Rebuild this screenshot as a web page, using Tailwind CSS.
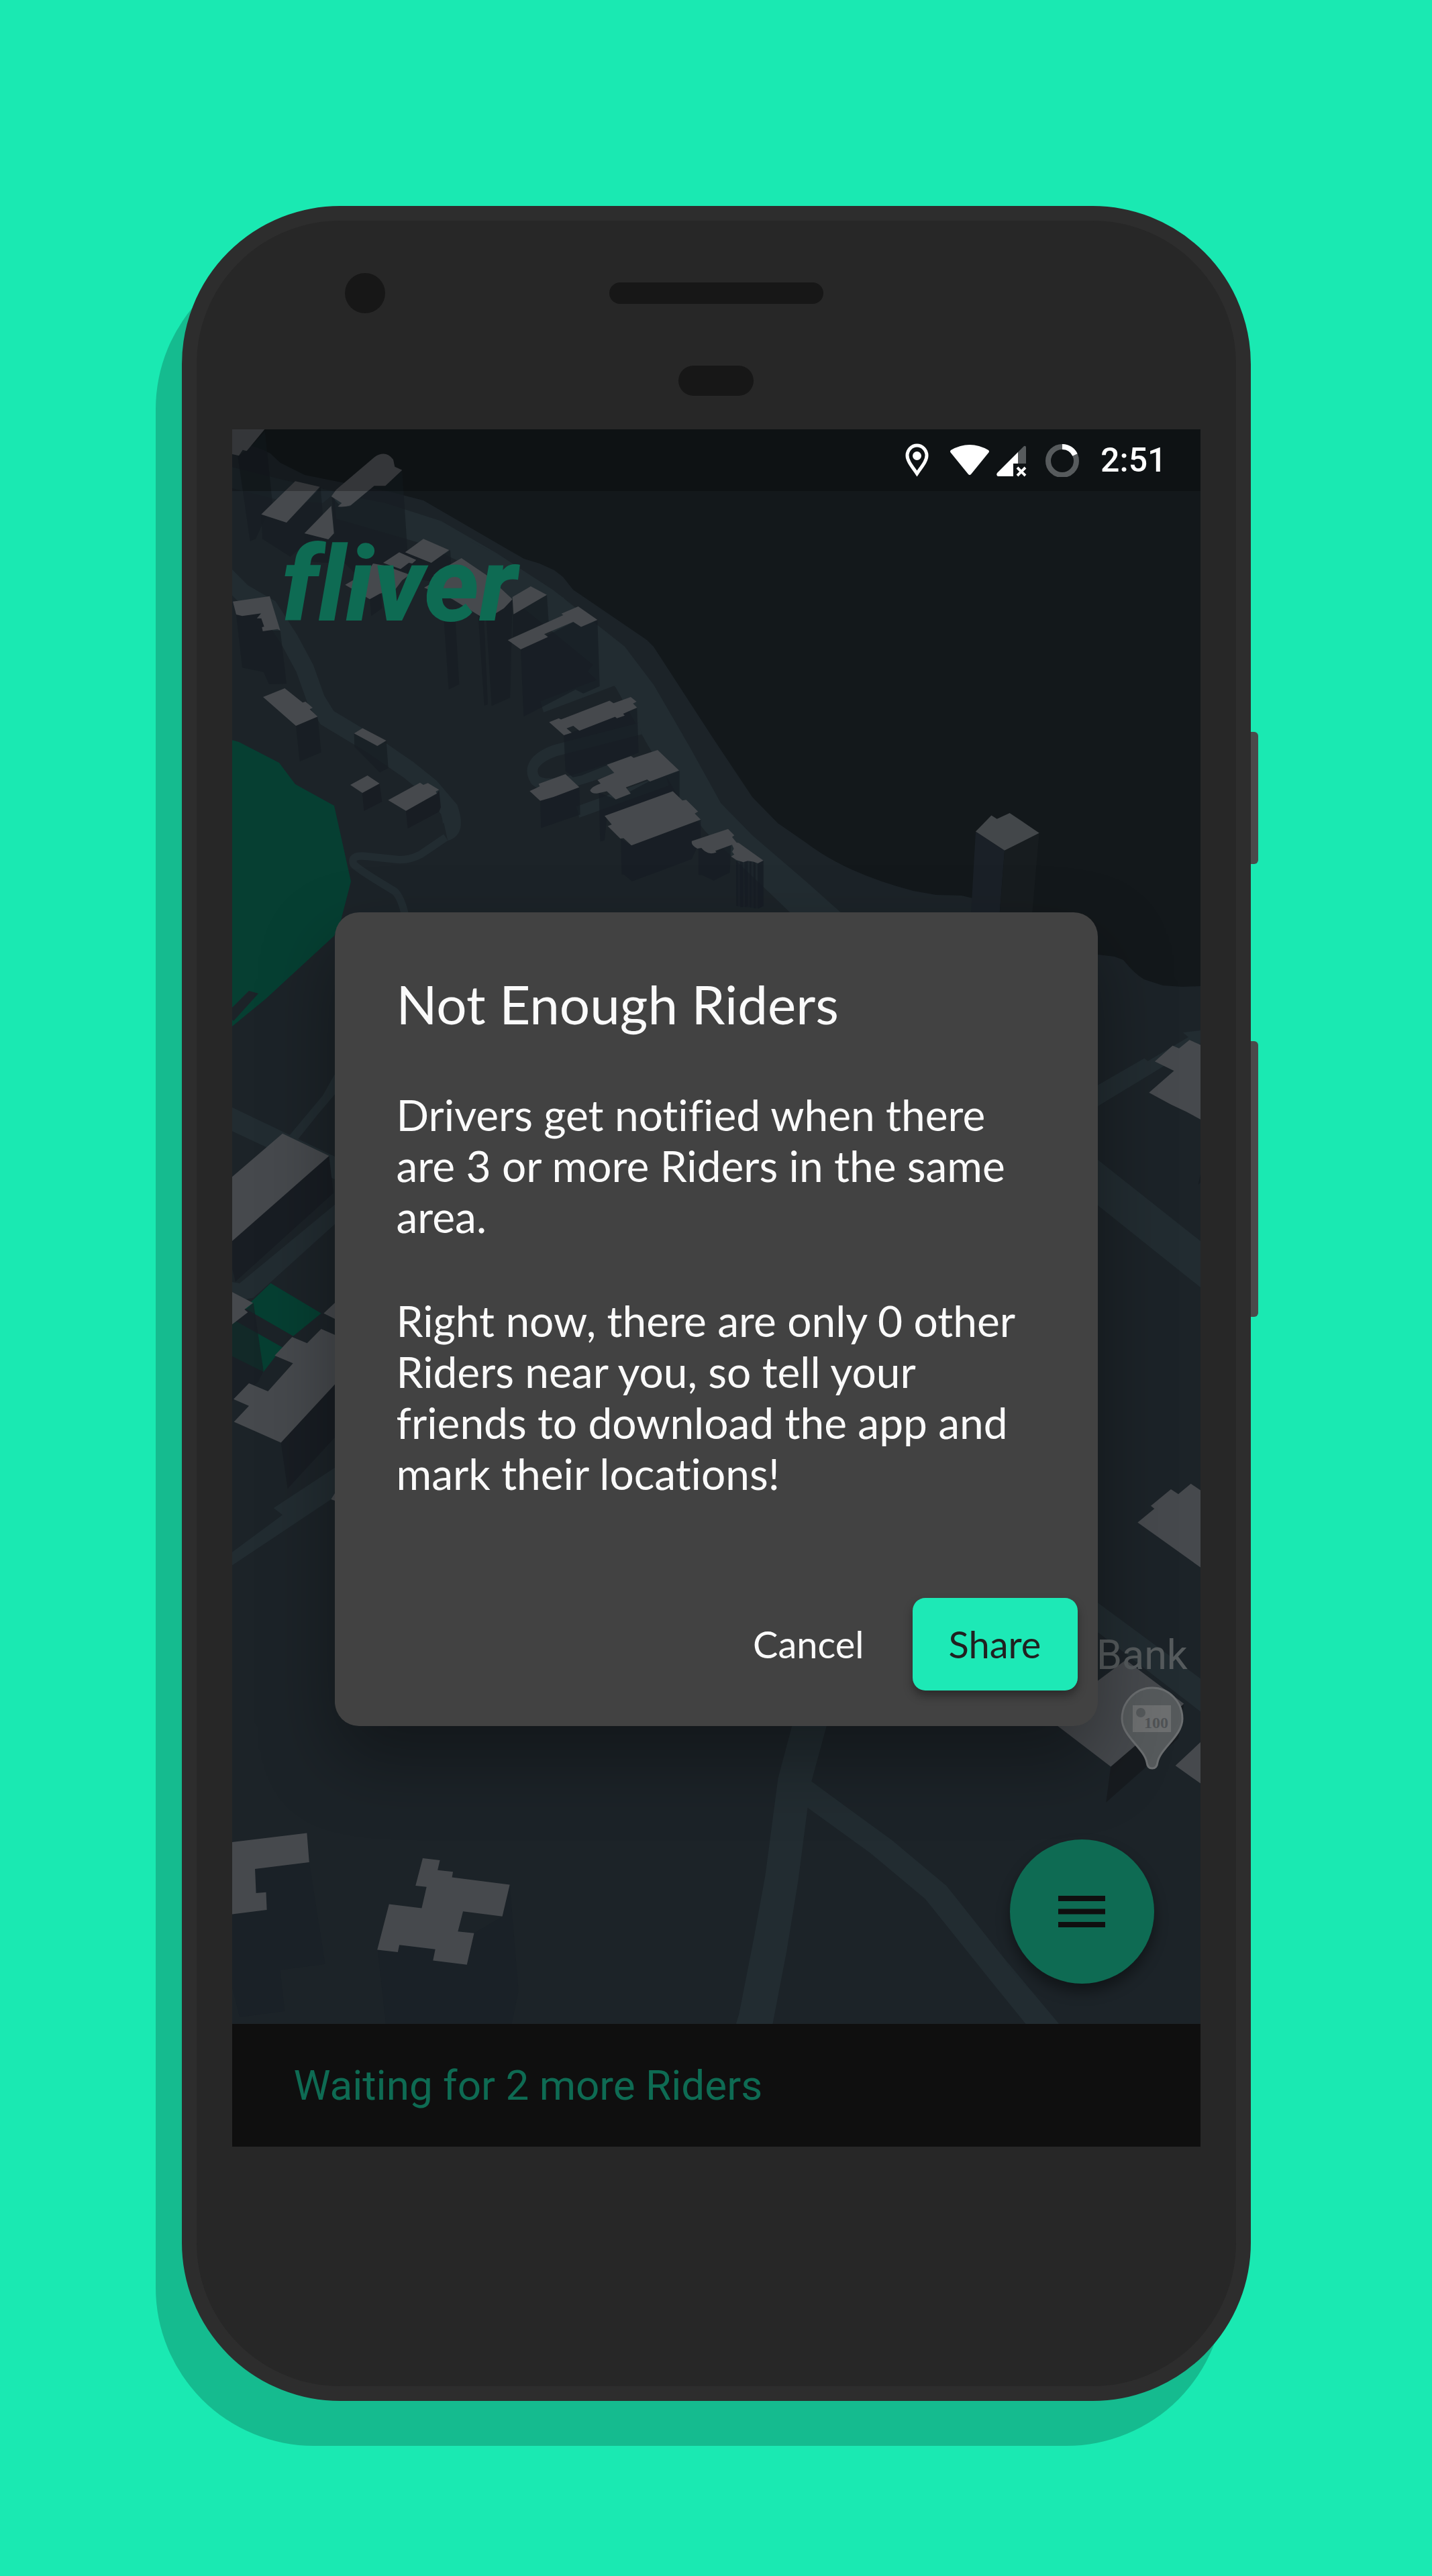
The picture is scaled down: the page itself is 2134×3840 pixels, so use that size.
<!DOCTYPE html>
<html lang="en">
<head>
<meta charset="utf-8">
<meta name="viewport" content="width=device-width, initial-scale=1">
<title>Fliver</title>
<script src="https://cdn.jsdelivr.net/npm/@tailwindcss/browser@4"></script>
</head>
<body class="min-h-screen bg-[#1ae9b2] px-8 pt-[307px] pb-[261px] font-['Lato',sans-serif]">
<div class="relative mx-auto w-full max-w-[1593px] rounded-[236px] border-[22px] border-[#2d2d2d] bg-[#272727] px-[53px] pb-[357px] shadow-[-39px_67px_0_0_#15bb8f]">
  <!-- Side buttons -->
  <div class="absolute top-[762px] -right-[33px] h-[197px] w-[11px] rounded-r-[6px] bg-[#4a4a4a]"></div>
  <div class="absolute top-[1223px] -right-[33px] h-[411px] w-[11px] rounded-r-[6px] bg-[#4a4a4a]"></div>

  <!-- Camera, speaker, sensor -->
  <div class="flex flex-col items-center pt-[78px] pb-[50px]">
    <div class="grid w-full grid-cols-[1fr_auto_1fr] items-center">
      <div class="ml-[168px] h-[60px] w-[60px] rounded-full bg-[#171717]"></div>
      <div class="h-8 w-[319px] rounded-full bg-[#171717]"></div>
    </div>
    <div class="mt-[78px] h-[45px] w-28 rounded-full bg-[#171717]"></div>
  </div>

  <!-- Screen -->
  <div class="relative flex flex-col overflow-hidden">
    <main class="relative flex min-h-[2377px] flex-col">
      <svg class="absolute inset-0 h-full w-full" viewBox="345 640 1443 2377" preserveAspectRatio="xMidYMid slice" aria-hidden="true">
        <rect x="345" y="640" width="1443" height="2377" fill="#1c2328"/>
        <!-- water -->
        <path fill="#13181b" d="M345 640V655L390 670 402 676 417 690 453 708 513 720 580 733 630 746 780 833 803 840 825 850 838 860 853 879 963 954 973 964 1062 1101 1120 1188 1158 1227 1200 1256Q1260 1302 1360 1328L1394 1334 1432 1335 1453 1340 1491 1359 1560 1410 1635 1423 1660 1426 1673 1431Q1690 1452 1704 1460L1732 1469 1761 1471 1788 1470V640Z"/>
        <!-- roads, north -->
        <g transform="translate(340 640) scale(.3333)" fill="#222c31">
          <path d="M0 165 240 225 480 280 420 330 240 320 0 260Z" fill="#1f282e"/>
          <path d="M470 285 700 330 950 410 1200 555 1500 755V900L1250 720 1050 600 860 510 480 400Z"/>
          <path d="M-20 650 60 730 180 800 270 940 340 1070 390 1210 440 1290 640 1410 800 1520 900 1600 985 1700Q1015 1790 970 1800" fill="none" stroke="#222c31" stroke-width="82"/>
          <path d="M970 1825 860 1900Q800 1932 740 1923L620 1910Q540 1900 558 1945Q580 1970 740 2065Q770 2090 790 2180" fill="none" stroke="#222c31" stroke-width="34"/>
        </g>
        <g transform="translate(700 780) scale(.3333 .3827)" fill="#222c31">
          <path d="M0 70 140 130 370 260 690 480 820 630 980 870 1120 1090 1260 1215 1500 1395 1700 1550H1470L1050 1200 940 1080 790 860 650 640 560 560 180 290 0 170Z"/>
          <path d="M760 800 380 885Q240 930 290 1000Q350 1050 640 950M320 715 610 620 540 560M480 1125 880 1000" fill="none" stroke="#222c31" stroke-width="46"/>
        </g>
        <!-- park -->
        <path fill="#063f32" d="M340 1102 355 1106 415 1137 439 1169 497 1201 522 1314 507 1372 497 1395 395 1489 345 1530Z"/>
        <path fill="#1c2328" d="M345 1502 370 1477 384 1481 347 1522 345 1520Z"/>

        <!-- buildings, north-west -->
        <g transform="translate(340 640) scale(.3333)">
          <g fill="#171d23" fill-opacity=".75">
            <path d="M40 120 80 95 162 10 195 330 120 490 95 500Z"/>
            <path d="M145 380 258 417 410 260 425 440 275 570 150 490Z"/>
            <path d="M340 465 445 492 470 465 490 600 340 590Z"/>
            <path d="M460 300 500 345 540 345 650 253 700 253 775 182 805 640 560 640 480 560Z"/>
            <path d="M790 550 905 597 990 540 1000 700 800 660Z"/>
            <path d="M630 755 680 725 685 800 637 835ZM960 830 1012 830 1030 1140 983 1163ZM1115 830 1140 825 1158 1230 1142 1235ZM1150 830 1268 760 1258 1200 1175 1237Z"/>
            <path d="M1270 825 1422 740 1430 860 1270 930Z"/>
            <path d="M33 828 140 825 165 900 230 900 258 1138 180 1140 155 1085 60 1066Z"/>
            <path d="M300 1325 397 1285 413 1445 317 1485ZM560 1360 665 1416 704 1393 713 1515 675 1535 562 1420Z"/>
          </g>
          <g fill="#46494d">
            <path d="M0 0H160L80 97 62 92 45 118 0 108Z"/>
            <path d="M297 232 407 257 258 417 145 380ZM458 342 470 465 445 492 338 465Z"/>
            <path d="M480 270 650 125Q700 90 735 135L742 167 775 182 700 253H650L545 340Q510 350 487 345L505 330 458 300Z"/>
            <path d="M870 490 985 540 905 597 788 550ZM762 550 838 584 820 600 805 597 768 625 690 597Z"/>
            <path d="M645 600 700 610 808 650 775 675 745 715 675 735 630 760 520 695 555 675 590 685Z"/>
            <path d="M1040 576 1152 652 1268 760 1230 800 1150 850 1115 830 1000 760 873 708 940 670 915 652 945 630Z"/>
            <path d="M1350 702 1422 740 1273 827 1268 750Z"/>
            <path d="M18 770 183 746 230 900 218 893 152 903 148 885 158 882 145 845H125L145 823 60 835 33 828Z"/>
            <path d="M250 1158 330 1222 343 1218 375 1245 362 1252 397 1285 300 1326 153 1197ZM598 1337 704 1392 664 1416 560 1360Z"/>
          </g>
        </g>
        <g transform="translate(340 1080) scale(.3333)">
          <path fill="#181d23" d="M597 306 674 264 685 345 604 386ZM792 386 930 310 940 295 948 370 940 390 800 465Z"/>
          <path fill="#46494d" d="M620 228 674 264 597 306 543 270ZM712 338 855 260 870 270 890 262 940 292 925 300 930 308 792 386Z"/>
        </g>
        <!-- buildings along the coast -->
        <g transform="translate(700 780) scale(.3333 .3827)">
          <g fill="#171d24" fill-opacity=".75">
            <path d="M225 490 460 385 495 404 568 378 578 635 505 663 470 648 238 753Z"/>
            <path d="M418 826 745 720 752 893 495 983 458 990 425 965Z"/>
            <path d="M312 1080 487 1028 491 1135 316 1187ZM575 1050 650 1075 800 1005 935 965V1080L610 1150 600 1235 580 1240Z"/>
            <path d="M673 1230 720 1255 1030 1155V1230L990 1308 723 1395 685 1368H676ZM1020 1265 1085 1285 1165 1250 1160 1360 1088 1392 1035 1370H1020Z"/>
            <path d="M1188 1315H1195V1490H1190ZM1205 1315H1219V1495H1207ZM1225 1315H1240V1490L1228 1496ZM1248 1315H1256V1495H1250ZM1265 1318H1275V1500H1267ZM1284 1324 1310 1314V1490L1286 1502Z"/>
            <path d="M1188 1315H1310V1490L1285 1500 1190 1490Z" fill-opacity=".35"/>
          </g>
          <g fill="#46494d">
            <path d="M167 455 415 358 407 352 482 324 568 376 495 404 460 384 330 432 347 443 225 491Z"/>
            <path d="M352 775 395 760 405 764 622 691 640 701 717 677 743 695 727 702 745 718 683 742 690 749 655 760 647 754 487 808 460 789 430 799 453 816 418 826Z"/>
            <path d="M610 941 718 907 730 914 837 883 933 963 803 1006 790 998 695 1029 717 1053 650 1076 610 1044 570 1052Q540 1055 535 1040 545 1025 582 1014L568 1000 643 972Z"/>
            <path d="M265 1043 310 1025 305 1015 425 977 487 1028 372 1066 312 1081Z"/>
            <path d="M600 1140 905 1044 948 1080 965 1077 1018 1123 1003 1131 1030 1154 720 1255 685 1227 670 1228 614 1180 632 1173Z"/>
            <path d="M990 1238 1152 1191 1180 1216 1170 1222 1190 1244 1200 1245 1310 1314 1285 1325 1265 1318 1240 1315 1220 1320 1190 1312 1165 1298 1180 1290 1170 1280 1178 1268 1170 1252 1095 1276 1100 1282Q1060 1295 1033 1265L1015 1267Q985 1255 990 1238Z"/>
          </g>
        </g>
        <!-- west edge -->
        <g transform="translate(340 1600) scale(.3333 .4847)">
          <path fill="#222c31" d="M0 100 480 258V328L0 173ZM480 -5V60L400 125 310 202 272 190 420 68ZM480 400V460L110 690 40 700 0 660V640L48 646ZM480 1210V1300L0 1520V1480L240 1358 200 1337Z"/>
          <path fill="#181d23" d="M0 520 448 255 468 368 30 640 0 560Z"/>
          <path fill="#46494d" d="M0 327 240 185 448 254 0 525Z"/>
          <path fill="#063f32" d="M187 645 413 738 288 808 70 722ZM0 750 240 843 155 918 0 865Z"/>
          <path fill="#181d23" fill-opacity=".65" d="M0 770 110 706 155 915 130 950 0 1015Z"/>
          <path fill="#181d23" d="M233 1136 480 950V1115L263 1277Z"/>
          <path fill="#46494d" d="M0 667 108 706 70 726 85 735 0 780ZM480 702V757L424 738ZM480 1285V1316L457 1310Z"/>
          <path fill="#46494d" d="M413 786 480 806V952L233 1136 23 1072 90 1023 21 1002 90 953 175 978 287 892 205 868 283 811 350 830Z"/>
        </g>
        <!-- east edge -->
        <g transform="translate(1360 1180) scale(.3444 .523)">
          <path fill="#1a2027" d="M270 114 395 168 374 345H250Z"/>
          <path fill="#171c1f" d="M395 168 545 118 515 345H374Z"/>
          <path fill="#43474a" d="M417 61 545 118 395 168 270 114 338 68 362 78Z"/>
          <path fill="#222c31" d="M790 840 1000 760 1015 768 1190 700 1167 687 1250 680V715L1040 800 790 900ZM790 1045 1250 1285V1417L790 1175Z"/>
          <path fill="#46494d" d="M1250 724V937L1180 912 1115 892 1020 858 1128 796 1045 769 1122 724 1150 732 1195 708Z"/>
          <path fill="#171d22" d="M1250 1070V1110L1233 1120Z"/>
        </g>
        <g transform="translate(1460 2180) scale(.3333 .5485)">
          <path fill="#46494d" d="M990 78V288L703 163 778 126 762 118 852 73 885 86 941 58ZM990 757V875L872 824Z"/>
          <path fill="#222c31" d="M500 370 990 590V680L500 450Z"/>
          <path fill="#171b1f" d="M583 827 910 656 885 750 562 924Z"/>
          <path fill="#46494d" d="M650 537 910 656 583 827 300 695Z"/>
        </g>
        <text x="1633" y="2488" fill="#565b5d" font-size="61" font-family="Roboto,sans-serif">Bank</text>
        <g transform="translate(1716 2564)">
          <path fill="#565a5c" stroke="#6b6e70" stroke-width="3" d="M0 -48A45 46 0 0 1 45 -2C45 24 12 42 8 63Q7 72 0 72T-8 63C-12 42 -45 24 -45 -2A45 46 0 0 1 0 -48Z"/>
          <rect x="-29" y="-22" width="57" height="40" fill="#6d6f70"/>
          <circle cx="-17" cy="-11" r="7" fill="#55595b"/>
          <text x="-12" y="12" font-size="24" font-weight="700" fill="#505356" font-family="'Liberation Serif',serif">100</text>
        </g>
        <!-- roads, south -->
        <g transform="translate(1020 2560) scale(.3827 .4209)">
          <path fill="#222c31" d="M425 0H560L492 227 805 435 1018 597 1230 840 1460 1090H1330L1205 950 935 643 720 480 477 320 440 580 395 830 340 1090H197L210 1050 268 780 312 560 362 215Z"/>
        </g>
        <!-- buildings, south-west -->
        <g transform="translate(340 2560) scale(.3827 .4337)">
          <path fill="#1a2127" d="M0 680 148 662 105 605 102 521 313 498 375 848 200 868 217 1010 42 1030 0 880ZM580 800 955 742 1066 684 1094 575 1128 940 1100 1060H612Z"/>
          <path fill="#46494d" d="M0 430 304 398 313 498 102 521 106 604 145 601 148 662 0 678ZM755 484 822 491 813 525 873 531 869 550 1094 575 1065 684 912 667 892 736 955 742 927 850 795 836 804 797 664 782 658 807 578 799 624 642 751 656 770 583 727 579Z"/>
        </g>
      </svg>

      <!-- Status bar -->
      <header class="relative flex h-[92px] items-center justify-end bg-black/25 pr-[50px] text-white">
        <svg class="mr-7 h-[50px] w-[38px]" viewBox="0 0 38 50" role="img" aria-label="Location">
          <path fill="none" stroke="#fff" stroke-width="5" d="M18.500 45C11 34 4 26 4 18A14.500 15 0 0 1 33 18C33 26 26 34 18.500 45Z"/>
          <circle cx="18.500" cy="18.500" r="6.500" fill="#fff"/>
        </svg>
        <svg class="mr-2 h-[50px] w-[62px]" viewBox="0 0 62 50" role="img" aria-label="Wi-Fi">
          <path fill="#fff" d="M3 10Q31 -6 59 10Q61 12 59 14L33 46Q31 48 29 46L3 14Q1 12 3 10Z"/>
        </svg>
        <svg class="mr-6 h-[50px] w-[48px]" viewBox="0 0 48 50" role="img" aria-label="No mobile data">
          <path fill="#575b5d" d="M33 13 42 4Q45 3 45 6V30H33Z"/>
          <path fill="#fff" d="M33 13V30H26V49H3Q0 47 2 44Z"/>
          <path stroke="#fff" stroke-width="4" d="M32 36 44 48M44 36 32 48"/>
        </svg>
        <svg class="mr-8 h-[50px] w-[52px]" viewBox="0 0 52 50" role="img" aria-label="Battery">
          <circle cx="27" cy="26" r="21" fill="none" stroke="#575b5d" stroke-width="8"/>
          <path fill="none" stroke="#fff" stroke-width="8" d="M27 5A21 21 0 0 1 46 17"/>
        </svg>
        <span class="font-['Roboto',sans-serif] text-[50px] leading-[60px] font-medium">2:51</span>
      </header>

      <h1 class="relative mt-[50px] pl-[74px] font-['Roboto',sans-serif] text-[156px] leading-[180px] font-extrabold text-[#0e6b53] italic [font-variant-ligatures:none]">fliver</h1>

      <button type="button" aria-label="Menu" class="absolute right-[69px] bottom-[60px] flex h-[215px] w-[215px] items-center justify-center rounded-full bg-[#0e6b53] shadow-[0_12px_20px_rgba(0,0,0,0.4)]">
        <svg class="h-[47px] w-[70px]" viewBox="0 0 70 47" fill="#0f0f0f" aria-hidden="true">
          <path d="M0 0H70V8H0ZM0 19.500H70V27.500H0ZM0 39H70V47H0Z"/>
        </svg>
      </button>
    </main>

    <footer class="flex h-[183px] items-center bg-[#0f0f0f] pl-[92px]">
      <p class="font-['Roboto',sans-serif] text-[62px] leading-[80px] text-[#0e6b53]">Waiting for 2 more Riders</p>
    </footer>

    <!-- Dialog -->
    <div class="absolute inset-x-0 top-[92px] bottom-0 flex items-center justify-center">
      <section role="dialog" aria-labelledby="dialog-title" class="w-full max-w-[1137px] rounded-[36px] bg-[#424242] pt-[91px] pb-[53px] text-[#fafafa] shadow-[0_50px_110px_rgba(0,0,0,0.34)] [font-variant-ligatures:none]">
        <div class="px-[92px]">
          <h2 id="dialog-title" class="text-[80px] leading-[90px]">Not Enough Riders</h2>
          <p class="mt-[83px] text-[64px] leading-[76px]">Drivers get notified when there<br>are 3 or more Riders in the same<br>area.</p>
          <p class="mt-[79px] text-[64px] leading-[76px]">Right now, there are only 0 other<br>Riders near you, so tell your<br>friends to download the app and<br>mark their locations!</p>
        </div>
        <div class="mt-[147px] flex justify-end gap-4 pr-[30px] text-[56px] leading-[66px]">
          <button type="button" class="h-[138px] px-[56px]">Cancel</button>
          <button type="button" class="h-[138px] w-[246px] rounded-[19px] bg-[#1de9b6] text-[#212121] shadow-[0_8px_14px_rgba(0,0,0,0.35)]">Share</button>
        </div>
      </section>
    </div>
  </div>
</div>
</body>
</html>
